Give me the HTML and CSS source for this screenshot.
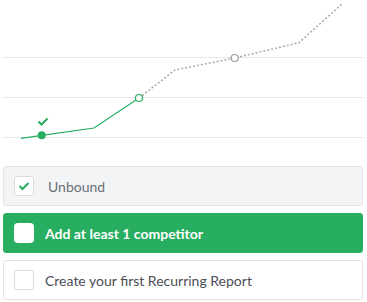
FILE: index.html
```html
<!DOCTYPE html>
<html lang="en">
<head>
    <meta charset="UTF-8">
    <meta name="viewport" content="width=device-width, initial-scale=1.0">
    <title>Onboarding</title>
    <link rel="stylesheet" href="styles.css">
</head>
<body>
    <!-- 进度图 -->
    <svg class="chart" width="367" height="160" viewBox="0 0 367 160">
        <line class="grid" x1="3" y1="57.5" x2="363" y2="57.5" />
        <line class="grid" x1="3" y1="97.5" x2="363" y2="97.5" />
        <line class="grid" x1="3" y1="137.5" x2="363" y2="137.5" />

        <polyline class="done" points="21,138.3 41.7,135.3 94,128 139,98" />
        <polyline class="todo" points="139,98 175,70 234.7,58 299,42.7 343,3" />

        <circle class="dot-done" cx="41.7" cy="135.3" r="4" />
        <path class="dot-check" d="M38.5,121.5 L41.5,124.5 L47.5,118.5" />
        <circle class="dot-next" cx="139" cy="98" r="3.5" />
        <circle class="dot-later" cx="234.7" cy="58" r="3.5" />
    </svg>

    <!-- 任务列表 -->
    <div class="steps">
        <div class="step done">
            <span class="box">
                <svg width="12" height="10" viewBox="0 0 12 10"><path d="M1.5,5 L4.5,8 L10.5,2" /></svg>
            </span>
            <span class="label">Unbound</span>
        </div>
        <div class="step active">
            <span class="box"></span>
            <span class="label">Add at least 1 competitor</span>
        </div>
        <div class="step">
            <span class="box"></span>
            <span class="label">Create your first Recurring Report</span>
        </div>
    </div>
</body>
</html>
```

FILE: styles.css
```css
body {
    margin: 0;
    background-color: #fff;
    font-family: Lato, "Open Sans", sans-serif;
}

.chart {
    display: block;
}
.grid {
    stroke: #e6e6e6;
    stroke-width: 1;
}
.done {
    fill: none;
    stroke: #27ae60;
    stroke-width: 1.2;
}
.todo {
    fill: none;
    stroke: #aaaaaa;
    stroke-width: 1.5;
    stroke-dasharray: 2 2;
}
.dot-done {
    fill: #27ae60;
}
.dot-check {
    fill: none;
    stroke: #27ae60;
    stroke-width: 2;
}
.dot-next {
    fill: #fff;
    stroke: #27ae60;
    stroke-width: 1.2;
}
.dot-later {
    fill: #fff;
    stroke: #9a9a9a;
    stroke-width: 1.2;
}

.steps {
    display: flex;
    flex-direction: column;
    gap: 7px;
    padding: 6px 4px 0 3px;
}
.step {
    display: flex;
    align-items: center;
    gap: 11px;
    height: 40px;
    box-sizing: border-box;
    padding: 0 10px;
    border: 1px solid #e4e4e4;
    border-radius: 3px;
    background-color: #fff;
    color: #4b4e56;
    font-size: 14px;
}
.box {
    display: flex;
    align-items: center;
    justify-content: center;
    width: 20px;
    height: 20px;
    box-sizing: border-box;
    border: 1px solid #dcdcdc;
    border-radius: 3px;
    background-color: #fff;
}
.box svg path {
    fill: none;
    stroke: #27ae60;
    stroke-width: 2;
}

.step.done {
    background-color: #f3f4f6;
    color: #6d7077;
}
.step.done .label {
    margin-left: 3px;
}
.step.active {
    background-color: #27ae60;
    border-color: #27ae60;
    color: #fff;
    font-weight: bold;
}
.step.active .box {
    border: none;
    border-radius: 4px;
}
```
